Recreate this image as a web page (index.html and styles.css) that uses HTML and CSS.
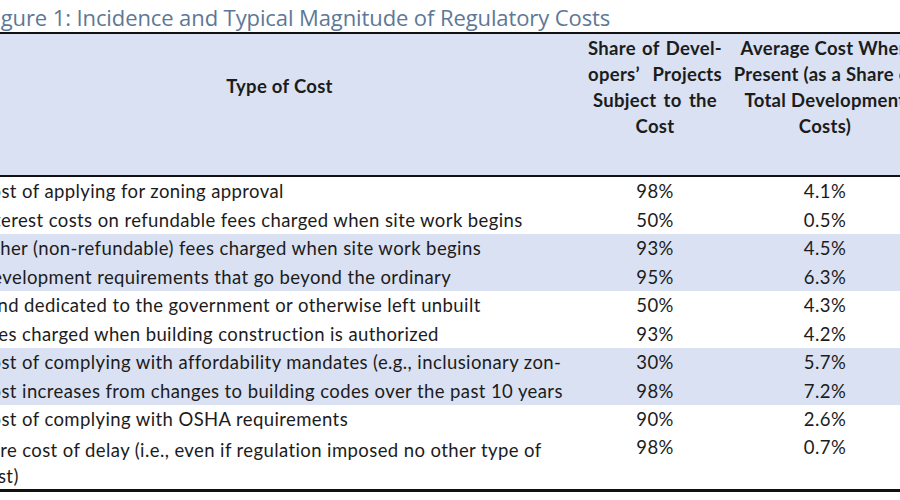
FILE: index.html
```html
<!DOCTYPE html>
<html>
<head>
<meta charset="utf-8">
<link rel="stylesheet" href="styles.css">
</head>
<body>
<div class="viewport">
  <div class="figure">
    <div class="title">Figure 1: Incidence and Typical Magnitude of Regulatory Costs</div>
    <table class="costs">
      <colgroup>
        <col class="c1"><col class="c2"><col class="c3">
      </colgroup>
      <thead>
        <tr>
          <th class="h-type">Type of Cost</th>
          <th class="h-share">
            <div class="jline"><span>Share</span><span>of</span><span>Devel-</span></div>
            <div class="jline"><span>opers’</span><span>Projects</span></div>
            <div class="jline narrow"><span>Subject</span><span>to</span><span>the</span></div>
            <div class="cline">Cost</div>
          </th>
          <th class="h-avg">Average Cost When<br>Present (as a Share of<br>Total Development<br>Costs)</th>
        </tr>
      </thead>
      <tbody>
        <tr><td>Cost of applying for zoning approval</td><td class="num">98%</td><td class="num">4.1%</td></tr>
        <tr><td>Interest costs on refundable fees charged when site work begins</td><td class="num">50%</td><td class="num">0.5%</td></tr>
        <tr class="shade"><td>Other (non-refundable) fees charged when site work begins</td><td class="num">93%</td><td class="num">4.5%</td></tr>
        <tr class="shade"><td>Development requirements that go beyond the ordinary</td><td class="num">95%</td><td class="num">6.3%</td></tr>
        <tr><td>Land dedicated to the government or otherwise left unbuilt</td><td class="num">50%</td><td class="num">4.3%</td></tr>
        <tr><td>Fees charged when building construction is authorized</td><td class="num">93%</td><td class="num">4.2%</td></tr>
        <tr class="shade"><td>Cost of complying with affordability mandates (e.g., inclusionary zon-</td><td class="num">30%</td><td class="num">5.7%</td></tr>
        <tr class="shade"><td>Cost increases from changes to building codes over the past 10 years</td><td class="num">98%</td><td class="num">7.2%</td></tr>
        <tr><td>Cost of complying with OSHA requirements</td><td class="num">90%</td><td class="num">2.6%</td></tr>
        <tr class="last"><td>Pure cost of delay (i.e., even if regulation imposed no other type of<br>cost)</td><td class="num">98%</td><td class="num">0.7%</td></tr>
      </tbody>
    </table>
  </div>
</div>
</body>
</html>
```

FILE: styles.css
```css
html, body {
  margin: 0;
  padding: 0;
  background: #ffffff;
}

.viewport {
  width: 900px;
  height: 500px;
  overflow: hidden;
}

.figure {
  display: flex;
  flex-direction: column;
  width: 957px;
  margin-left: -29px;
}

.title {
  font-family: "Open Sans", "Liberation Sans", sans-serif;
  font-size: 22px;
  line-height: 34px;
  height: 32px;
  color: #5d7896;
  padding-left: 13px;
  letter-spacing: -0.1px;
  white-space: nowrap;
}

.costs {
  border-collapse: collapse;
  table-layout: fixed;
  width: 957px;
  font-family: Lato, "Liberation Sans", sans-serif;
  font-size: 18.5px;
  letter-spacing: 0.4px;
  color: #1c1c1c;
}

.c1 { width: 617px; }
.c2 { width: 134px; }
.c3 { width: 206px; }

.costs thead tr {
  background: #d9e1f2;
  border-top: 2px solid #111;
  border-bottom: 2px solid #111;
}

.costs th {
  vertical-align: top;
  font-weight: bold;
  letter-spacing: 0.3px;
  line-height: 26px;
  height: 143px;
  padding: 1px 0 0;
  box-sizing: border-box;
  white-space: nowrap;
}

.h-type {
  padding-top: 39px !important;
  text-align: center;
}

.jline {
  display: flex;
  justify-content: space-between;
}

.jline.narrow {
  padding: 0 5px;
}

.cline {
  text-align: center;
}

.h-avg {
  text-align: center;
}

.costs td {
  line-height: 28.5px;
  height: 28.5px;
  padding: 0 6px 0 7px;
  vertical-align: top;
  white-space: nowrap;
}

.costs td.num {
  text-align: center;
  padding: 0;
}

.shade {
  background: #d9e1f2;
}

.last td {
  line-height: 26px;
  padding-top: 3px;
  padding-bottom: 0;
  height: 52px;
}

.costs tbody {
  border-bottom: 3px solid #111;
}
```
